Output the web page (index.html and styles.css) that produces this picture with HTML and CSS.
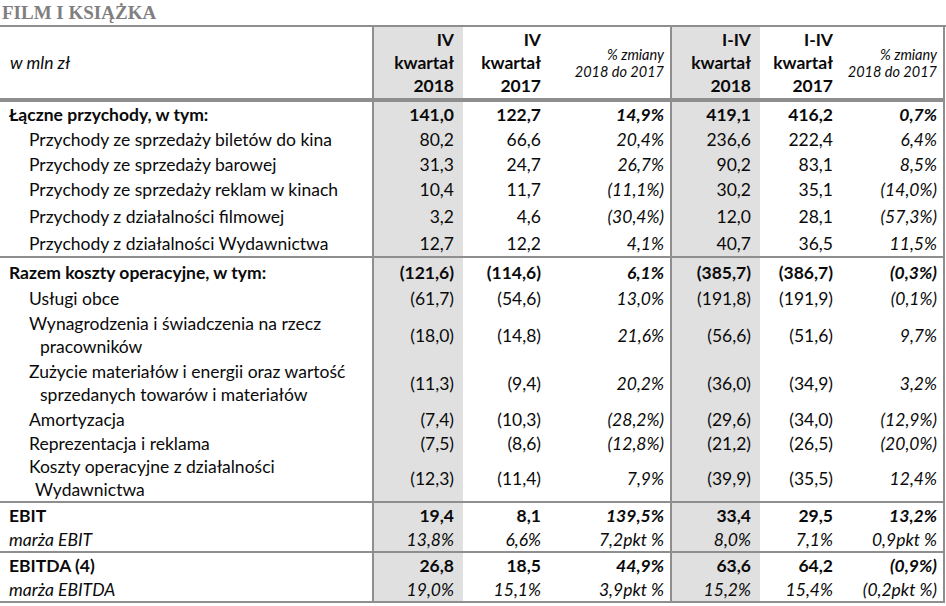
FILE: index.html
```html
<!DOCTYPE html>
<html lang="pl">
<head>
<meta charset="utf-8">
<title>Film i Książka</title>
<link rel="stylesheet" href="styles.css">
</head>
<body>
<div class="title">FILM I KSIĄŻKA</div>
<table class="fin">
  <colgroup>
    <col class="w-lbl"><col class="w-c1"><col class="w-c2"><col class="w-c3"><col class="w-c4"><col class="w-c5"><col class="w-c6">
  </colgroup>
  <thead>
    <tr class="hdr">
      <th class="lbl unit">w mln zł</th>
      <th class="num g bl">IV<br>kwartał<br>2018</th>
      <th class="num">IV<br>kwartał<br>2017</th>
      <th class="pct small">% zmiany<br>2018 do 2017</th>
      <th class="num g bl">I-IV<br>kwartał<br>2018</th>
      <th class="num">I-IV<br>kwartał<br>2017</th>
      <th class="pct small br">% zmiany<br>2018 do 2017</th>
    </tr>
  </thead>
  <tbody>
    <tr class="top bold h25">
      <td class="lbl main">Łączne przychody, w tym:</td>
      <td class="num g bl">141,0</td><td class="num">122,7</td><td class="pct">14,9%</td>
      <td class="num g bl">419,1</td><td class="num">416,2</td><td class="pct br">0,7%</td>
    </tr>
    <tr class="h25">
      <td class="lbl sub">Przychody ze sprzedaży biletów do kina</td>
      <td class="num g bl">80,2</td><td class="num">66,6</td><td class="pct">20,4%</td>
      <td class="num g bl">236,6</td><td class="num">222,4</td><td class="pct br">6,4%</td>
    </tr>
    <tr class="h24">
      <td class="lbl sub">Przychody ze sprzedaży barowej</td>
      <td class="num g bl">31,3</td><td class="num">24,7</td><td class="pct">26,7%</td>
      <td class="num g bl">90,2</td><td class="num">83,1</td><td class="pct br">8,5%</td>
    </tr>
    <tr class="h27">
      <td class="lbl sub">Przychody ze sprzedaży reklam w kinach</td>
      <td class="num g bl">10,4</td><td class="num">11,7</td><td class="pct">(11,1%)</td>
      <td class="num g bl">30,2</td><td class="num">35,1</td><td class="pct br">(14,0%)</td>
    </tr>
    <tr class="h27">
      <td class="lbl sub">Przychody z działalności filmowej</td>
      <td class="num g bl">3,2</td><td class="num">4,6</td><td class="pct">(30,4%)</td>
      <td class="num g bl">12,0</td><td class="num">28,1</td><td class="pct br">(57,3%)</td>
    </tr>
    <tr class="h26">
      <td class="lbl sub">Przychody z działalności Wydawnictwa</td>
      <td class="num g bl">12,7</td><td class="num">12,2</td><td class="pct">4,1%</td>
      <td class="num g bl">40,7</td><td class="num">36,5</td><td class="pct br">11,5%</td>
    </tr>

    <tr class="top bold h28">
      <td class="lbl main">Razem koszty operacyjne, w tym:</td>
      <td class="num g bl">(121,6)</td><td class="num">(114,6)</td><td class="pct">6,1%</td>
      <td class="num g bl">(385,7)</td><td class="num">(386,7)</td><td class="pct br">(0,3%)</td>
    </tr>
    <tr class="h25">
      <td class="lbl sub">Usługi obce</td>
      <td class="num g bl">(61,7)</td><td class="num">(54,6)</td><td class="pct">13,0%</td>
      <td class="num g bl">(191,8)</td><td class="num">(191,9)</td><td class="pct br">(0,1%)</td>
    </tr>
    <tr class="h48">
      <td class="lbl sub"><span class="ln">Wynagrodzenia i świadczenia na rzecz</span><span class="ln cont">pracowników</span></td>
      <td class="num g bl">(18,0)</td><td class="num">(14,8)</td><td class="pct">21,6%</td>
      <td class="num g bl">(56,6)</td><td class="num">(51,6)</td><td class="pct br">9,7%</td>
    </tr>
    <tr class="h48">
      <td class="lbl sub"><span class="ln">Zużycie materiałów i energii oraz wartość</span><span class="ln cont">sprzedanych towarów i materiałów</span></td>
      <td class="num g bl">(11,3)</td><td class="num">(9,4)</td><td class="pct">20,2%</td>
      <td class="num g bl">(36,0)</td><td class="num">(34,9)</td><td class="pct br">3,2%</td>
    </tr>
    <tr class="h24">
      <td class="lbl sub">Amortyzacja</td>
      <td class="num g bl">(7,4)</td><td class="num">(10,3)</td><td class="pct">(28,2%)</td>
      <td class="num g bl">(29,6)</td><td class="num">(34,0)</td><td class="pct br">(12,9%)</td>
    </tr>
    <tr class="h24">
      <td class="lbl sub">Reprezentacja i reklama</td>
      <td class="num g bl">(7,5)</td><td class="num">(8,6)</td><td class="pct">(12,8%)</td>
      <td class="num g bl">(21,2)</td><td class="num">(26,5)</td><td class="pct br">(20,0%)</td>
    </tr>
    <tr class="h46">
      <td class="lbl sub"><span class="ln">Koszty operacyjne z działalności</span><span class="ln cont2">Wydawnictwa</span></td>
      <td class="num g bl">(12,3)</td><td class="num">(11,4)</td><td class="pct">7,9%</td>
      <td class="num g bl">(39,9)</td><td class="num">(35,5)</td><td class="pct br">12,4%</td>
    </tr>

    <tr class="top bold h25">
      <td class="lbl main">EBIT</td>
      <td class="num g bl">19,4</td><td class="num">8,1</td><td class="pct">139,5%</td>
      <td class="num g bl">33,4</td><td class="num">29,5</td><td class="pct br">13,2%</td>
    </tr>
    <tr class="it h23">
      <td class="lbl main">marża EBIT</td>
      <td class="num g bl">13,8%</td><td class="num">6,6%</td><td class="pct">7,2pkt %</td>
      <td class="num g bl">8,0%</td><td class="num">7,1%</td><td class="pct br">0,9pkt %</td>
    </tr>

    <tr class="top bold h24">
      <td class="lbl main">EBITDA (4)</td>
      <td class="num g bl">26,8</td><td class="num">18,5</td><td class="pct">44,9%</td>
      <td class="num g bl">63,6</td><td class="num">64,2</td><td class="pct br">(0,9%)</td>
    </tr>
    <tr class="it h24 last">
      <td class="lbl main">marża EBITDA</td>
      <td class="num g bl">19,0%</td><td class="num">15,1%</td><td class="pct">3,9pkt %</td>
      <td class="num g bl">15,2%</td><td class="num">15,4%</td><td class="pct br">(0,2pkt %)</td>
    </tr>
  </tbody>
</table>
</body>
</html>
```

FILE: styles.css
```css
html, body {
  margin: 0;
  padding: 0;
  background: #ffffff;
}

body {
  width: 946px;
  font-family: Lato, "Open Sans", sans-serif;
  color: #0a0a0a;
}

.title {
  height: 25px;
  line-height: 25px;
  padding-left: 2px;
  font-family: "Liberation Serif", "DejaVu Serif", serif;
  font-weight: bold;
  font-size: 19px;
  color: #7f7f7f;
  border-bottom: 2px solid #8e8e8e;
  box-sizing: content-box;
}

.fin {
  width: 945px;
  border-collapse: separate;
  border-spacing: 0;
  table-layout: fixed;
  font-size: 17.5px;
}

.w-lbl { width: 372px; }
.w-c1 { width: 91px; }
.w-c2 { width: 87px; }
.w-c3 { width: 120px; }
.w-c4 { width: 90px; }
.w-c5 { width: 82px; }
.w-c6 { width: 103px; }

.fin th,
.fin td {
  padding: 0;
  vertical-align: middle;
  font-weight: normal;
  white-space: nowrap;
}

.hdr > th {
  height: 73px;
  line-height: 23px;
  font-weight: bold;
  border-bottom: 2px solid #8e8e8e;
  box-sizing: border-box;
}

.hdr > th.unit {
  font-weight: normal;
  font-style: italic;
  font-size: 17.5px;
  text-align: left;
  padding-left: 10px;
}

.hdr > th.small {
  font-weight: normal;
  font-style: italic;
  font-size: 14.5px;
  line-height: 17px;
}

.num {
  text-align: right;
  padding-right: 9px !important;
}

.pct {
  text-align: right;
  font-style: italic;
  padding-right: 6px !important;
}

.g { background: #e0e0e0; }
.bl { border-left: 2px solid #8e8e8e; }
.br { border-right: 2px solid #8e8e8e; }

.top > td { border-top: 2px solid #8e8e8e; }
.last > td { border-bottom: 2px solid #8e8e8e; }

.bold > td { font-weight: bold; }
.it > td { font-style: italic; }

.lbl { text-align: left; }
.main { padding-left: 9px !important; }
.sub { padding-left: 29px !important; }

.ln {
  display: block;
  line-height: 23px;
}
.ln.cont { padding-left: 11px; }
.ln.cont2 { padding-left: 6px; }

.h23 > td { height: 23px; }
.h24 > td { height: 24px; }
.h25 > td { height: 25px; }
.h26 > td { height: 26px; }
.h27 > td { height: 27px; }
.h28 > td { height: 28px; }
.h46 > td { height: 46px; }
.h48 > td { height: 48px; }
```
